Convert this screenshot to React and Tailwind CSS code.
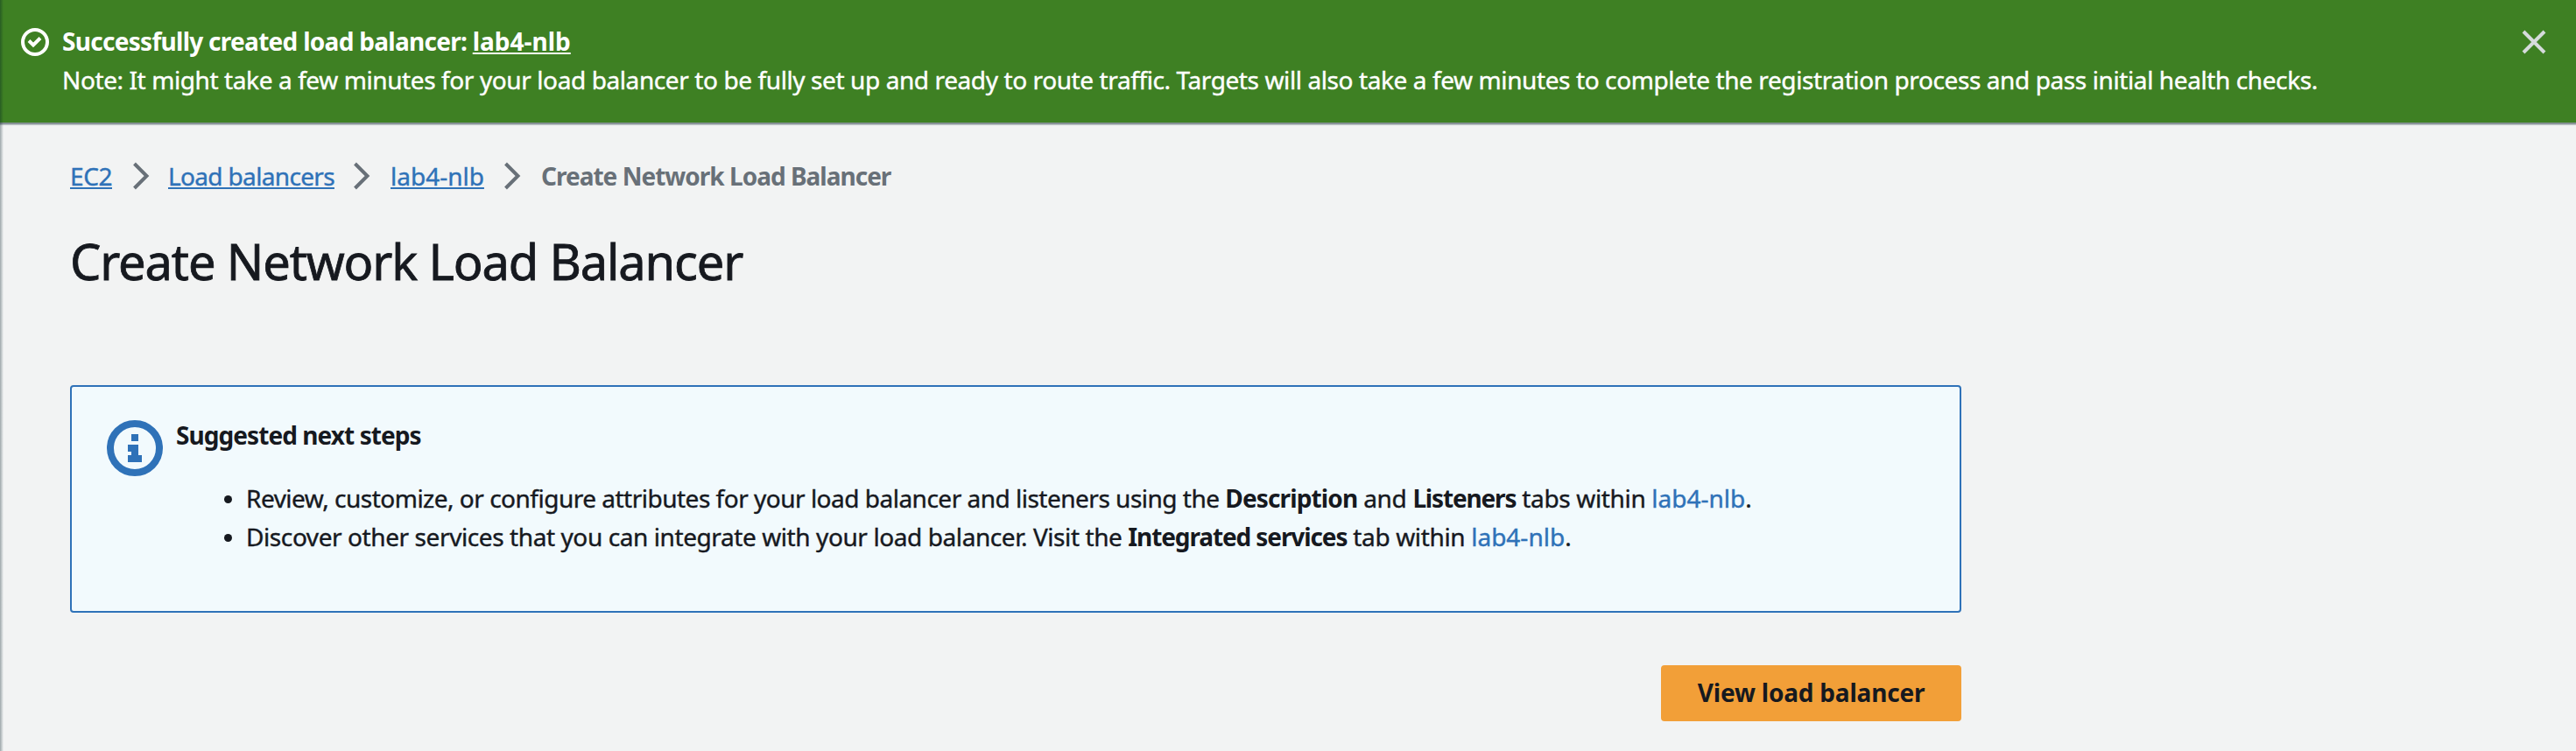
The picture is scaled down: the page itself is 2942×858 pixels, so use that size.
function CheckCircle() {
  return (
    <svg className="mt-[7px] size-8 shrink-0" viewBox="0 0 32 32" fill="none" stroke="#ffffff" strokeWidth="4">
      <circle cx="16" cy="16" r="14" />
      <path d="M9 14.5 L14 19.5 L22 11.5" />
    </svg>
  );
}

function CloseIcon() {
  return (
    <svg className="size-8" viewBox="0 0 32 32" fill="none" stroke="#d5dbdb" strokeWidth="4">
      <path d="M4 4 L28 28 M28 4 L4 28" />
    </svg>
  );
}

function Chevron() {
  return (
    <svg className="h-8 w-5 shrink-0" viewBox="0 0 20 32" fill="none" stroke="#687078" strokeWidth="4">
      <path d="M2.5 2 L16.5 16 L2.5 30" />
    </svg>
  );
}

function InfoIcon() {
  return (
    <svg className="mt-[5px] size-16 shrink-0" viewBox="0 0 64 64">
      <circle cx="32" cy="32" r="28" fill="none" stroke="#2f72b8" strokeWidth="8" />
      <path fill="#2f72b8" d="M28 16h8v8h-8z M24 28h12v12h4v8H24v-8h4v-4h-4z" />
    </svg>
  );
}

function Item({ children }) {
  return (
    <li className="flex items-start">
      <span className="mt-[19px] mr-4 size-[9px] shrink-0 rounded-full bg-[#16191f]" />
      <span className="tracking-[-0.35px] whitespace-pre [-webkit-text-stroke:0.4px]">{children}</span>
    </li>
  );
}

const crumb =
  "text-[#2f72b8] underline decoration-2 underline-offset-[2px] [text-decoration-skip-ink:none] [-webkit-text-stroke:0.4px]";

export default function App() {
  return (
    <div className="relative flex h-[858px] w-full flex-col overflow-hidden bg-[#f2f3f3] font-['Noto_Sans','Open_Sans',sans-serif] text-[28px] leading-[44px] text-[#16191f]">
      <header className="flex h-[142px] items-start border-b-2 border-[#879196] bg-[#3e8023] pt-[25px] pr-8 pl-6 text-white shadow-[0_1px_1px_rgba(0,28,36,0.2)]">
        <CheckCircle />
        <div className="ml-[15px] grow whitespace-nowrap">
          <p className="font-bold tracking-[-0.71px] whitespace-pre">
            {"Successfully created load balancer: "}
            <a className="tracking-normal underline decoration-2 underline-offset-[2px] [text-decoration-skip-ink:none]">lab4-nlb</a>
          </p>
          <p className="tracking-[-0.4px] [-webkit-text-stroke:0.4px]">
            Note: It might take a few minutes for your load balancer to be fully set up and ready to route traffic. Targets will also take a few minutes to complete the registration process and pass initial health checks.
          </p>
        </div>
        <button aria-label="Dismiss" className="mt-[7px] size-8">
          <CloseIcon />
        </button>
      </header>

      <main className="flex w-[2240px] flex-col pt-[37px] pl-20">
        <nav className="flex items-center whitespace-nowrap">
          <a className={`${crumb} mr-[23px] w-12 tracking-[-0.43px]`}>EC2</a>
          <Chevron />
          <a className={`${crumb} mr-[21px] ml-[21px] w-[190px] tracking-[-0.66px]`}>Load balancers</a>
          <Chevron />
          <a className={`${crumb} mr-[22px] ml-[23px] w-[107px]`}>lab4-nlb</a>
          <Chevron />
          <span className="ml-[23px] font-bold tracking-[-0.99px] text-[#687078]">Create Network Load Balancer</span>
        </nav>

        <h1 className="mt-[39px] text-[56px] leading-[72px] font-normal tracking-[-1.14px] [-webkit-text-stroke:0.8px]">
          Create Network Load Balancer
        </h1>

        <section className="mt-[106px] flex h-[260px] items-start rounded-[4px] border-2 border-[#2f72b8] bg-[#f2fafd] pt-[33px] pl-10">
          <InfoIcon />
          <div className="ml-[15px]">
            <h2 className="font-bold tracking-[-0.93px]">Suggested next steps</h2>
            <ul className="mt-7 pl-[55px]">
              <Item>
                <span className="tracking-[-0.5px]">{"Review, customize, or configure attributes for your load balancer and listeners using the "}</span>
                <b className="tracking-[-0.87px] [-webkit-text-stroke:0]">Description</b>
                {" and "}
                <b className="tracking-[-1.16px] [-webkit-text-stroke:0]">Listeners</b>
                {" tabs within "}
                <a className="tracking-normal text-[#2f72b8]">lab4-nlb</a>.
              </Item>
              <Item>
                <span className="tracking-[-0.41px]">{"Discover other services that you can integrate with your load balancer. Visit the "}</span>
                <b className="tracking-[-1.11px] [-webkit-text-stroke:0]">Integrated services</b>
                {" tab within "}
                <a className="tracking-normal text-[#2f72b8]">lab4-nlb</a>.
              </Item>
            </ul>
          </div>
        </section>

        <button className="mt-[60px] flex h-16 w-[343px] justify-center self-end rounded-[4px] bg-[#f29f38] pt-[9px] font-bold tracking-[-0.2px] whitespace-nowrap">
          View load balancer
        </button>
      </main>

      <div className="pointer-events-none absolute inset-y-0 left-0 w-1 bg-linear-to-r from-[#001c24]/35 to-transparent" />
    </div>
  );
}
